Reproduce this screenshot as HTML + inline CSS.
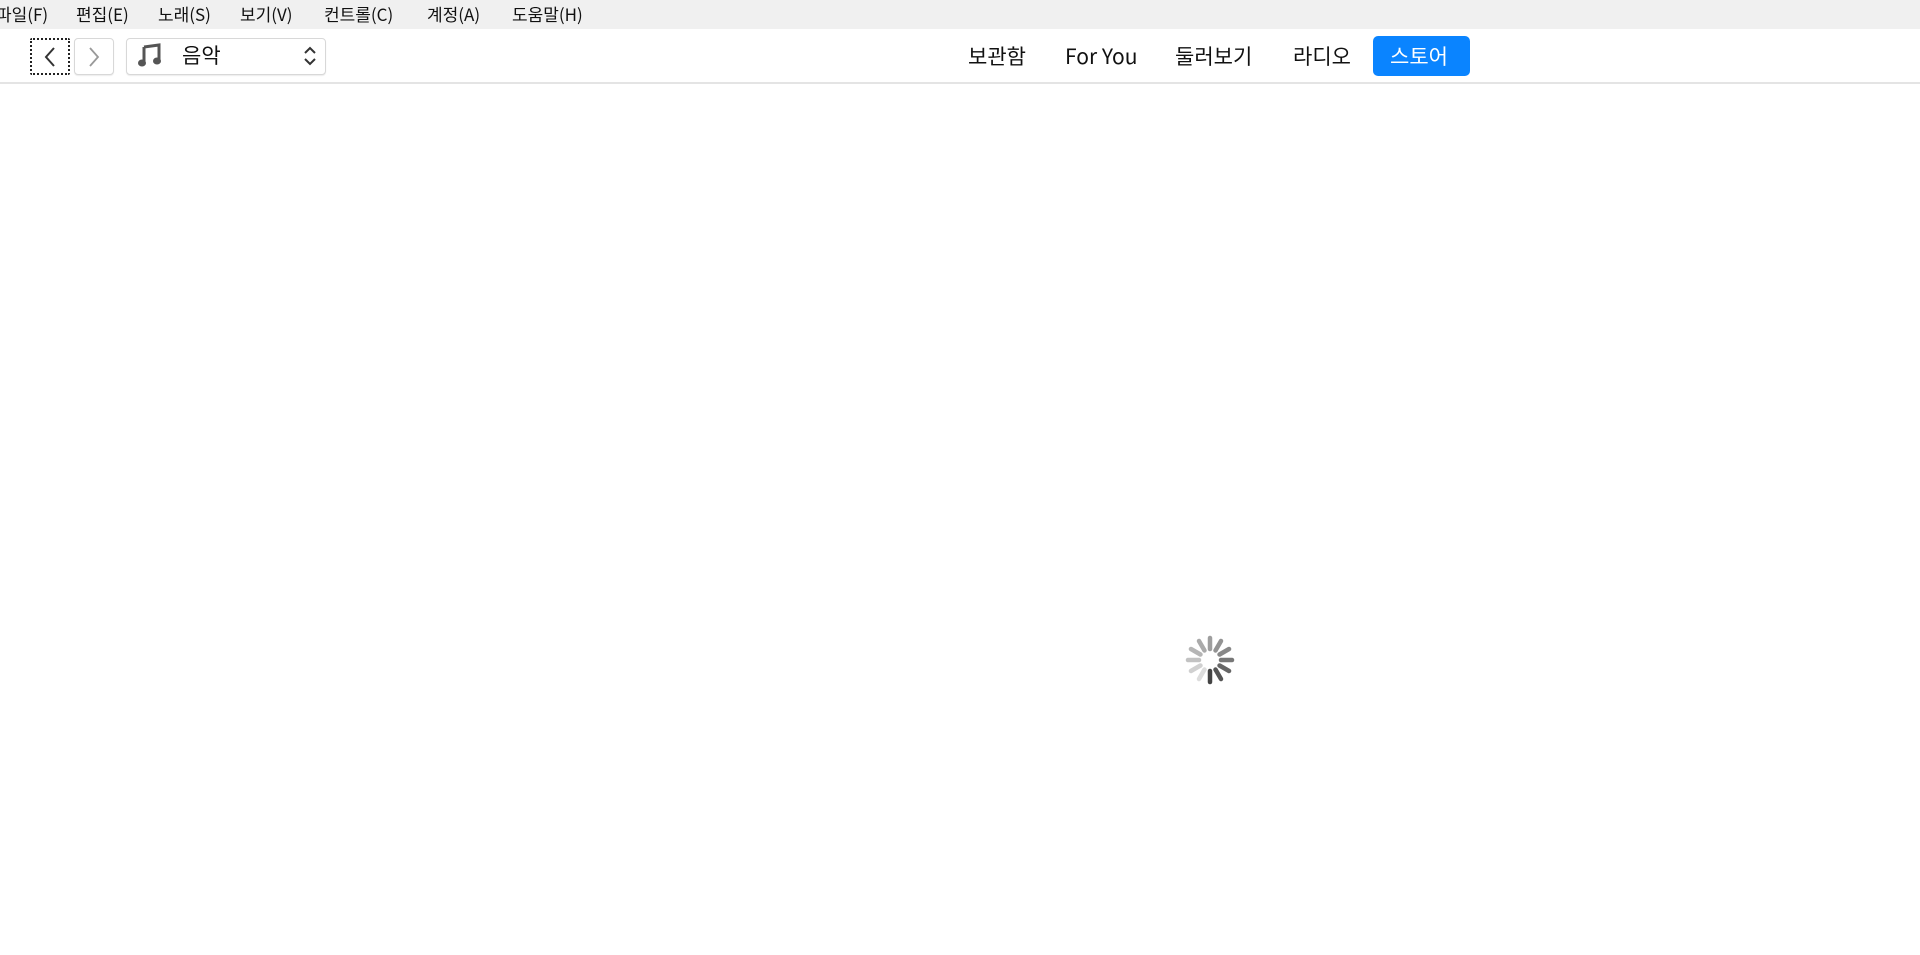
<!DOCTYPE html>
<html><head><meta charset="utf-8"><style>
body{margin:0;width:1920px;height:955px;background:#fff;font-family:"Noto Sans CJK KR","Liberation Sans",sans-serif;overflow:hidden;position:relative}
.menu{position:absolute;left:0;top:0;width:1920px;height:29px;background:#f0f0f0;font-size:17px;color:#111}
.menu span{position:absolute;top:1px;line-height:26px;white-space:nowrap}
.tb{position:absolute;top:29px;left:0;width:1920px;height:53px;background:#fff;border-bottom:2px solid #e4e4e4}
.btn{position:absolute;box-sizing:border-box;border:1px solid #d8d8d8;border-radius:4px;background:#fff;box-shadow:0 1px 1px rgba(0,0,0,.08)}
.tab{position:absolute;top:12px;line-height:30px;font-size:21px;color:#111;white-space:nowrap}
</style></head><body>
<div class="menu">
<span style="left:-4px">파일(F)</span><span style="left:76px">편집(E)</span><span style="left:158px">노래(S)</span><span style="left:240px">보기(V)</span><span style="left:324px">컨트롤(C)</span><span style="left:427px">계정(A)</span><span style="left:512px">도움말(H)</span>
</div>
<div class="tb">
<div class="btn" style="left:30px;top:9px;width:40px;height:37px;border:2px dotted #222;border-radius:2px;box-shadow:none"></div>
<svg style="position:absolute;left:40px;top:17px" width="20" height="22"><path d="M14 2 L6 11 L14 20" stroke="#333" stroke-width="2" fill="none"/></svg>
<div class="btn" style="left:74px;top:9px;width:40px;height:37px"></div>
<svg style="position:absolute;left:84px;top:17px" width="20" height="22"><path d="M6 2 L14 11 L6 20" stroke="#999" stroke-width="1.8" fill="none"/></svg>
<div class="btn" style="left:126px;top:9px;width:200px;height:37px"></div>
<svg style="position:absolute;left:137px;top:14px" width="26" height="26"><path d="M7 4 L22 2 L22 18" stroke="#555" stroke-width="3" fill="none"/><path d="M7 4 L7 20" stroke="#555" stroke-width="3"/><ellipse cx="5" cy="20" rx="4" ry="3.5" fill="#555"/><ellipse cx="20" cy="18" rx="4" ry="3.5" fill="#555"/></svg>
<span class="tab" style="left:182px;top:11px">음악</span>
<svg style="position:absolute;left:303px;top:16px" width="14" height="22"><path d="M2 8 L7 3 L12 8 M2 14 L7 19 L12 14" stroke="#333" stroke-width="2" fill="none"/></svg>
<span class="tab" style="left:968px">보관함</span>
<span class="tab" style="left:1065px">For You</span>
<span class="tab" style="left:1175px">둘러보기</span>
<span class="tab" style="left:1293px">라디오</span>
<div style="position:absolute;left:1373px;top:7px;width:97px;height:40px;background:#0a84ff;border-radius:5px"></div>
<span class="tab" style="left:1390px;color:#fff">스토어</span>
</div>
<svg style="position:absolute;left:1180px;top:630px" width="60" height="60" viewBox="-30 -30 60 60">
<g stroke-width="4.5" stroke-linecap="round">
<line x1="0" y1="11" x2="0" y2="22" stroke="#444" transform="rotate(0)"/>
<line x1="0" y1="11" x2="0" y2="22" stroke="#555" transform="rotate(-30)"/>
<line x1="0" y1="11" x2="0" y2="22" stroke="#666" transform="rotate(-60)"/>
<line x1="0" y1="11" x2="0" y2="22" stroke="#777" transform="rotate(-90)"/>
<line x1="0" y1="11" x2="0" y2="22" stroke="#888" transform="rotate(-120)"/>
<line x1="0" y1="11" x2="0" y2="22" stroke="#939393" transform="rotate(-150)"/>
<line x1="0" y1="11" x2="0" y2="22" stroke="#9e9e9e" transform="rotate(-180)"/>
<line x1="0" y1="11" x2="0" y2="22" stroke="#aaa" transform="rotate(-210)"/>
<line x1="0" y1="11" x2="0" y2="22" stroke="#b5b5b5" transform="rotate(-240)"/>
<line x1="0" y1="11" x2="0" y2="22" stroke="#c2c2c2" transform="rotate(-270)"/>
<line x1="0" y1="11" x2="0" y2="22" stroke="#d0d0d0" transform="rotate(-300)"/>
<line x1="0" y1="11" x2="0" y2="22" stroke="#dcdcdc" transform="rotate(-330)"/>
</g></svg>
</body></html>
